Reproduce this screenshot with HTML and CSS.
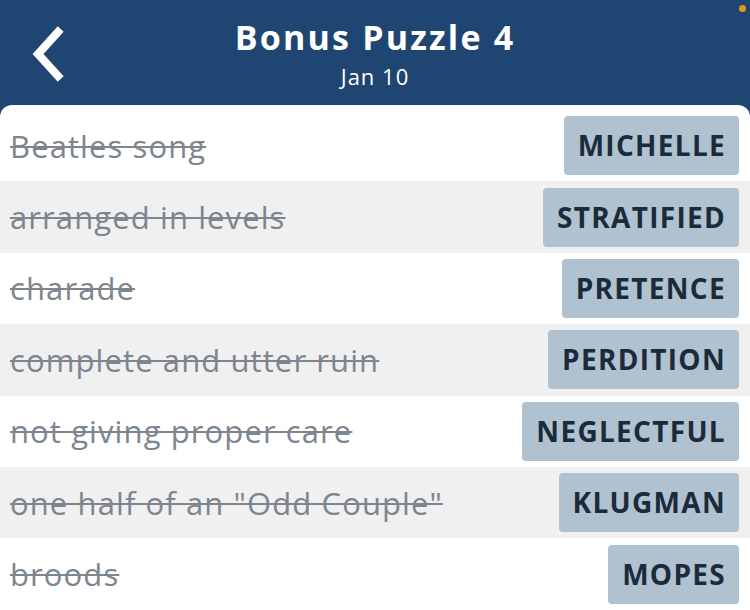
FILE: index.html
```html
<!DOCTYPE html>
<html lang="en">
<head>
    <meta charset="UTF-8">
    <meta name="viewport" content="width=device-width, initial-scale=1.0">
    <title>Bonus Puzzle 4</title>
    <link rel="stylesheet" href="styles.css">
</head>
<body>
    <header class="topbar">
        <a class="back" href="#" aria-label="Back">
            <svg width="40" height="56" viewBox="0 0 40 56">
                <path d="M30 6 L10 28 L30 50" fill="none" stroke="#fff" stroke-width="8" stroke-linecap="square" stroke-linejoin="miter"/>
            </svg>
        </a>
        <div class="titles">
            <h1>Bonus Puzzle 4</h1>
            <div class="date">Jan 10</div>
        </div>
        <span class="dot"></span>
    </header>

    <div class="card">
        <div class="row">
            <span class="clue">Beatles song</span>
            <span class="answer">MICHELLE</span>
        </div>
        <div class="row">
            <span class="clue">arranged in levels</span>
            <span class="answer">STRATIFIED</span>
        </div>
        <div class="row">
            <span class="clue">charade</span>
            <span class="answer">PRETENCE</span>
        </div>
        <div class="row">
            <span class="clue">complete and utter ruin</span>
            <span class="answer">PERDITION</span>
        </div>
        <div class="row">
            <span class="clue">not giving proper care</span>
            <span class="answer">NEGLECTFUL</span>
        </div>
        <div class="row">
            <span class="clue">one half of an "Odd Couple"</span>
            <span class="answer">KLUGMAN</span>
        </div>
        <div class="row">
            <span class="clue">broods</span>
            <span class="answer">MOPES</span>
        </div>
    </div>
</body>
</html>
```

FILE: styles.css
```css
body {
    margin: 0;
    background: #1f4672;
    font-family: "Open Sans", Lato, sans-serif;
    overflow: hidden;
}
.topbar {
    position: relative;
    height: 105px;
    display: flex;
    align-items: center;
    justify-content: center;
    color: #fff;
}
.back {
    position: absolute;
    left: 28px;
    top: 26px;
}
.titles {
    text-align: center;
}
.titles h1 {
    margin: 0;
    font-size: 34px;
    font-weight: 700;
    line-height: 42px;
    letter-spacing: 2.2px;
}
.date {
    margin-top: 4px;
    font-size: 22px;
    line-height: 28px;
    letter-spacing: 1px;
}
.dot {
    position: absolute;
    right: 4px;
    top: 5px;
    width: 7px;
    height: 7px;
    border-radius: 50%;
    background: #e8951c;
}
.card {
    background: #fff;
    border-radius: 12px 12px 0 0;
    padding-top: 5px;
    min-height: 510px;
}
.row {
    height: 71.4px;
    display: flex;
    align-items: center;
    justify-content: space-between;
    padding: 0 11px 0 10px;
    box-sizing: border-box;
}
.row:nth-child(even) {
    background: #f0f0f0;
}
.clue {
    color: #7d868f;
    font-size: 31px;
    letter-spacing: 1.1px;
    text-decoration: line-through;
    text-decoration-thickness: 2px;
}
.answer {
    background: #b0c1d0;
    color: #1c2b3b;
    font-size: 28px;
    font-weight: 700;
    letter-spacing: 1.3px;
    height: 59px;
    line-height: 59px;
    padding: 0 13px 0 14px;
    border-radius: 4px;
}
```
